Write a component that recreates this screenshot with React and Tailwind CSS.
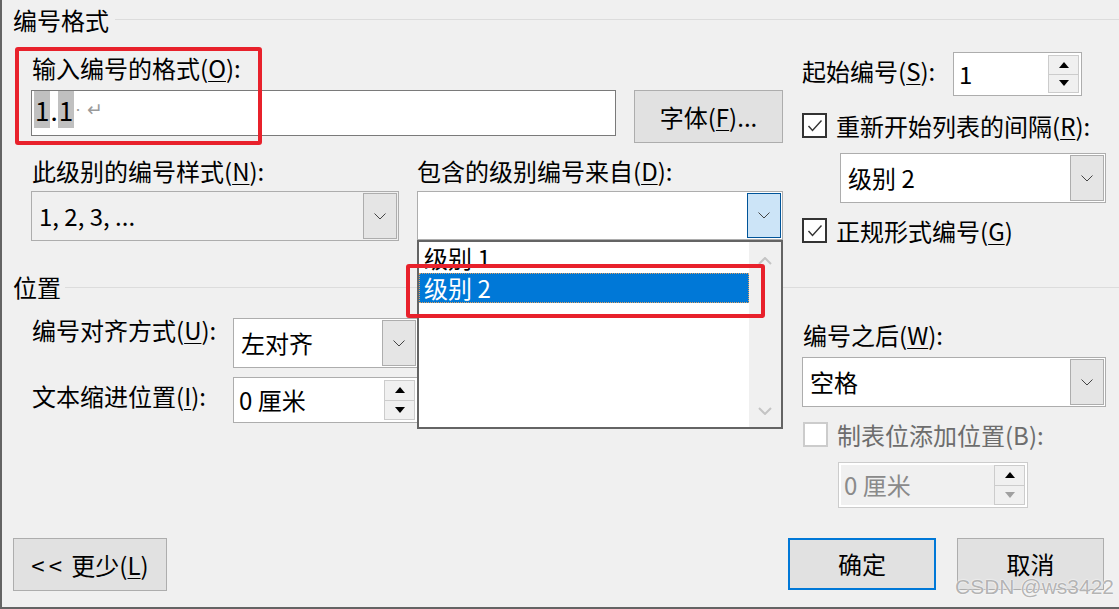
import React from "react";

const U = ({ children }) => (
  <span className="underline decoration-1 underline-offset-[3px]">{children}</span>
);

function Chevron({ className = "" }) {
  return (
    <svg width="12" height="7" viewBox="0 0 12 7" className={className}>
      <polyline points="0.5,0.5 6,6 11.5,0.5" fill="none" stroke="currentColor" strokeWidth="1" />
    </svg>
  );
}

function Tri({ up, className = "" }) {
  return (
    <svg width="10" height="6" viewBox="0 0 10 6" className={className}>
      <polygon points={up ? "0,6 10,6 5,0" : "0,0 10,0 5,6"} fill="currentColor" />
    </svg>
  );
}

// combobox with the little chevron button on the right
function Combo({ className = "", text, bg = "bg-white", btn = "bg-[#e5e5e5] border-[#adadad]" }) {
  return (
    <div className={`flex border border-[#adadad] p-px ${bg} ${className}`}>
      <div className="flex-1 flex items-center pl-[6px] text-[24px] leading-none">{text}</div>
      <div className={`w-[34px] border flex items-center justify-center text-[#444] ${btn}`}>
        <Chevron />
      </div>
    </div>
  );
}

function Spin({ className = "", text, disabled }) {
  return (
    <div
      className={`flex border p-[2px] bg-white ${
        disabled ? "border-[#cccccc]" : "border-[#adadad]"
      } ${className}`}
    >
      <div
        className={`flex-1 flex items-center pl-[3px] text-[24px] leading-none ${
          disabled ? "bg-[#f0f0f0] text-[#8a8a8a]" : ""
        }`}
      >
        {text}
      </div>
      <div className="w-[31px] flex flex-col">
        <div className="flex-1 flex items-center justify-center border border-[#cccccc] bg-[#f0f0f0]">
          <Tri up className="text-black" />
        </div>
        <div className="flex-1 flex items-center justify-center border border-t-0 border-[#cccccc] bg-[#f0f0f0]">
          <Tri className={disabled ? "text-[#a0a0a0]" : "text-black"} />
        </div>
      </div>
    </div>
  );
}

function Check({ checked, disabled }) {
  return (
    <div
      className={`w-[25px] h-[25px] shrink-0 border-2 bg-white flex items-center justify-center ${
        disabled ? "border-[#cccccc]" : "border-[#333333]"
      }`}
    >
      {checked && (
        <svg width="21" height="21" viewBox="0 0 21 21">
          <polyline points="4.5,11 8.5,15.5 17.5,5.5" fill="none" stroke="#333" strokeWidth="1.4" />
        </svg>
      )}
    </div>
  );
}

function Section({ title, lineGap }) {
  return (
    <div className="h-[40px] flex items-center pl-[13px]">
      <span className="text-[24px] leading-none">{title}</span>
      <div className={`flex-1 h-px bg-[#dcdcdc] ${lineGap}`} />
    </div>
  );
}

export default function App() {
  return (
    <div className="w-[1119px] h-[609px] bg-[#f0f0f0] relative overflow-hidden text-black font-['Noto_Sans_CJK_SC',sans-serif] shadow-[inset_2px_-2px_0_0_#646464]">
      <Section title="编号格式" lineGap="ml-[6px] -mt-[2px]" />

      {/* upper block */}
      <div className="flex h-[227px]">
        <div className="w-[783px] pl-[31px] flex flex-col">
          <div className="mt-[12px] h-[32px] leading-[32px] pl-px text-[24px]">
            输入编号的格式(<U>O</U>):
          </div>
          <div className="mt-[6px] flex items-start">
            <div className="w-[585px] h-[46px] border border-[#7a7a7a] bg-white pl-[2px] flex items-start">
              <span className="inline-block h-[37px] leading-[37px] text-[26px] bg-[#c0c0c0] px-px">1</span>
              <span className="inline-block h-[37px] leading-[37px] text-[26px]">.</span>
              <span className="inline-block h-[37px] leading-[37px] text-[26px] bg-[#c0c0c0] px-px">1</span>
              <span className="inline-block h-[37px] leading-[37px] text-[18px] text-[#9a9a9a] ml-px font-['Liberation_Sans',sans-serif]">
                ·
              </span>
              <span className="inline-block h-[37px] leading-[37px] text-[19px] text-[#9a9a9a] ml-[6px] font-['DejaVu_Sans',sans-serif]">
                ↵
              </span>
            </div>
            <div className="ml-[18px] w-[149px] h-[53px] border border-[#adadad] bg-[#e1e1e1] flex items-center justify-center text-[24px] leading-none">
              字体(<U>F</U>)...
            </div>
          </div>
          <div className="mt-[12px] h-[32px] flex text-[24px] leading-[32px]">
            <div className="w-[386px] pl-px">
              此级别的编号样式(<U>N</U>):
            </div>
            <div>
              包含的级别编号来自(<U>D</U>):
            </div>
          </div>
          <div className="mt-[4px] flex items-start">
            <Combo className="w-[368px] h-[50px]" text="1, 2, 3, ..." bg="bg-[#f0f0f0]" />
            <Combo
              className="ml-[18px] w-[366px] h-[49px]"
              text=""
              btn="bg-[#cce4f7] border-[#005499]"
            />
          </div>
        </div>

        <div className="ml-[19px] w-[304px] flex flex-col">
          <div className="mt-[12px] flex items-start">
            <div className="w-[151px] mt-[3px] h-[32px] leading-[32px] text-[24px]">
              起始编号(<U>S</U>):
            </div>
            <Spin className="w-[129px] h-[44px]" text="1" />
          </div>
          <div className="mt-[17px] h-[25px] flex items-center gap-[9px]">
            <Check checked />
            <span className="text-[24px] leading-none">
              重新开始列表的间隔(<U>R</U>):
            </span>
          </div>
          <Combo className="mt-[15px] ml-[38px] w-[266px] h-[50px]" text="级别 2" />
          <div className="mt-[15px] h-[25px] flex items-center gap-[9px]">
            <Check checked />
            <span className="text-[24px] leading-none">
              正规形式编号(<U>G</U>)
            </span>
          </div>
        </div>
      </div>

      <Section title="位置" lineGap="ml-[4px]" />

      {/* lower block */}
      <div className="flex h-[202px]">
        <div className="w-[783px] pl-[32px] flex flex-col">
          <div className="mt-[7px] flex items-start">
            <div className="w-[201px] h-[32px] leading-[32px] text-[24px]">
              编号对齐方式(<U>U</U>):
            </div>
            <Combo className="mt-[4px] w-[185px] h-[50px]" text="左对齐" />
          </div>
          <div className="mt-[9px] flex items-start">
            <div className="w-[201px] mt-[3px] h-[32px] leading-[32px] text-[24px]">
              文本缩进位置(<U>I</U>):
            </div>
            <Spin className="w-[185px] h-[46px]" text="0 厘米" />
          </div>
        </div>

        <div className="ml-[19px] w-[304px] flex flex-col">
          <div className="mt-[12px] h-[32px] leading-[32px] text-[24px] pl-px">
            编号之后(<U>W</U>):
          </div>
          <Combo className="mt-[6px] w-[304px] h-[50px]" text="空格" />
          <div className="mt-[15px] h-[25px] flex items-center gap-[9px] pl-px">
            <Check disabled />
            <span className="text-[24px] leading-none text-[#6d6d6d]">制表位添加位置(B):</span>
          </div>
          <Spin className="mt-[15px] ml-[36px] w-[190px] h-[46px]" text="0 厘米" disabled />
        </div>
      </div>

      {/* bottom buttons */}
      <div className="mt-[29px] flex items-start">
        <div className="ml-[13px] w-[154px] h-[53px] border border-[#adadad] bg-[#e1e1e1] flex items-center justify-center text-[24px] leading-none">
          <span className="tracking-[4px]">{"<<"}</span>
          <span>&nbsp;更少(</span>
          <U>L</U>)
        </div>
        <div className="ml-[621px] w-[148px] h-[52px] border-2 border-[#0078d7] bg-[#e1e1e1] flex items-center justify-center text-[24px] leading-none">
          确定
        </div>
        <div className="ml-[21px] w-[147px] h-[52px] border border-[#adadad] bg-[#e1e1e1] flex items-center justify-center text-[24px] leading-none">
          取消
        </div>
      </div>

      {/* open dropdown list */}
      <div className="absolute left-[417px] top-[240px] w-[366px] h-[189px] border-2 border-[#646464] bg-white flex">
        <div className="flex-1 pt-px">
          <div className="h-[30px] flex items-center pl-[5px] text-[24px] leading-none">级别 1</div>
          <div className="h-[30px] flex items-center pl-[4px] text-[24px] leading-none bg-[#0078d7] text-white border border-dotted border-[#e0a060]">
            级别 2
          </div>
        </div>
        <div className="w-[32px] bg-[#f0f0f0] flex flex-col items-center justify-between pt-[15px] pb-[12px]">
          <svg width="14" height="8" viewBox="0 0 14 8">
            <polyline points="1,7 7,1 13,7" fill="none" stroke="#c4c4c4" strokeWidth="2" />
          </svg>
          <svg width="14" height="8" viewBox="0 0 14 8">
            <polyline points="1,1 7,7 13,1" fill="none" stroke="#c4c4c4" strokeWidth="2" />
          </svg>
        </div>
      </div>

      {/* annotation boxes */}
      <div className="absolute left-[15px] top-[47px] w-[247px] h-[98px] border-4 border-[#e8212b] rounded-[3px]" />
      <div className="absolute left-[406px] top-[264px] w-[359px] h-[54px] border-4 border-[#e8212b] rounded-[3px]" />

      {/* watermark */}
      <div className="absolute left-[955px] top-[576px] text-[21px] leading-none text-[#b4b4b4] font-['Liberation_Sans',sans-serif] [text-shadow:0_0_1px_#ffffff,0_0_2px_#ffffff]">
        CSDN @ws3422
      </div>
    </div>
  );
}
